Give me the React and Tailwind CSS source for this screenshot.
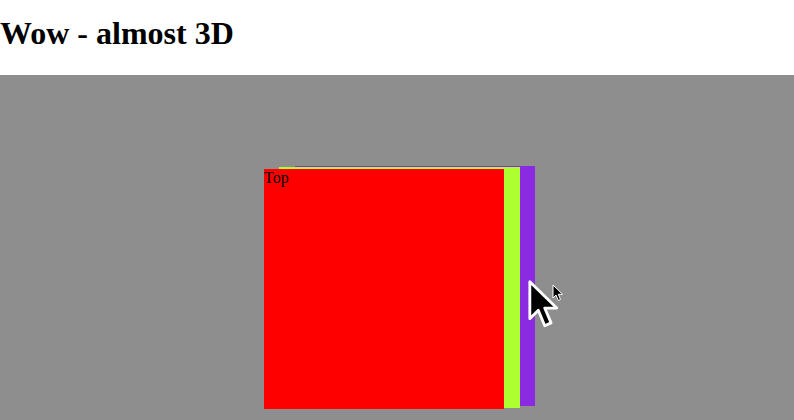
import React from 'react';

function Cursor({ className }) {
  return (
    <svg viewBox="0 0 24 36" className={className}>
      <path d="M2 2 L2 28 L8 22 L12.5 33 L17 31 L12.5 20.5 L21 20.5 Z" fill="#000" stroke="#fff" strokeWidth="2" strokeLinejoin="round" />
    </svg>
  );
}

export default function App() {
  return (
    <div className="flex flex-col w-[794px] h-[420px] overflow-hidden bg-white font-['Liberation_Serif',serif]">
      <header className="h-[75px] pt-[15px]">
        <h1 className="text-[32px] font-bold leading-[37px] text-black">Wow - almost 3D</h1>
      </header>
      <main className="flex-1 bg-[#8e8e8e] pl-[264px] pt-[91px]">
        <div className="relative w-[296px] h-[243px]">
          <div className="absolute left-[31px] top-0 w-[240px] h-[240px] bg-[#8a2be2]" />
          <div className="absolute left-[15px] top-[1px] w-[241px] h-[241px] bg-[#adff2f]" />
          <div className="absolute left-0 top-[3px] w-[240px] h-[240px] bg-[#ff0000] text-black text-[16px] leading-[18px]">Top</div>
          <Cursor className="absolute left-[263px] top-[113px] w-[34px] h-[51px]" />
          <Cursor className="absolute left-[288px] top-[118px] w-[12px] h-[18px]" />
        </div>
      </main>
    </div>
  );
}
